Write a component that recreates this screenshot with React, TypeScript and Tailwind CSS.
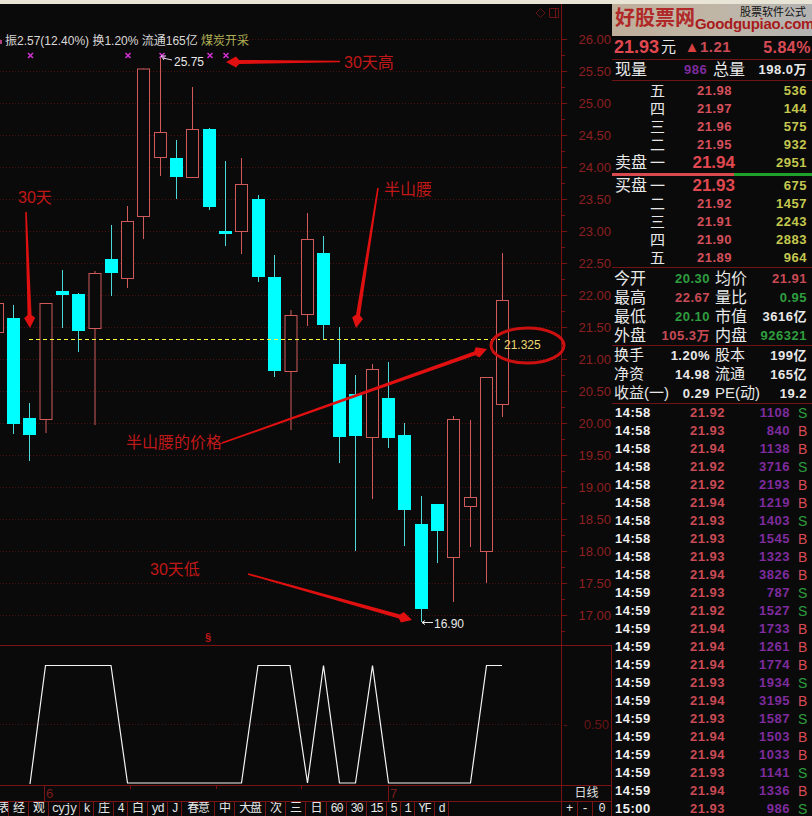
import React from "react";

const SANS = "font-['Liberation_Sans','Noto_Sans_CJK_SC',sans-serif]";

// x, top, bottom of body, wick top, wick bottom
type Candle = [number, number, number, number, number];

const upCandles: Candle[] = [
  [-9, 303, 332, 303, 332],
  [39.5, 303, 419, 303, 433],
  [88.5, 273, 328, 271, 425],
  [121, 221, 278, 206, 288],
  [137, 68.5, 216, 68.5, 239],
  [154, 132, 157, 57, 176],
  [186, 129, 177, 87, 177],
  [235, 184, 231, 158, 254],
  [284.5, 315, 371, 310, 430],
  [301, 239, 314, 213, 326],
  [366, 369, 437, 364, 499],
  [447, 419, 557, 416, 602],
  [464, 497, 506, 420, 547],
  [480, 377, 551, 377, 583],
  [496, 300, 404, 253, 417],
];

const downCandles: Candle[] = [
  [7, 318, 424, 305, 434],
  [23, 418, 435, 403, 461],
  [56, 291, 295, 270, 328],
  [72, 294, 331, 293, 352],
  [105, 259, 273, 225, 296],
  [170, 158, 177, 140, 199],
  [203, 129, 207, 128, 210],
  [219, 231, 234, 161, 246],
  [252, 199, 277, 195, 282],
  [268, 277, 371, 255, 377],
  [317, 253, 325, 236, 340],
  [333, 364, 437, 327, 463],
  [349, 394, 436, 375, 551],
  [382, 398, 438, 362, 448],
  [398, 435, 510, 423, 546],
  [415, 524, 609, 496, 622],
  [431, 504, 531, 504, 563],
];

const prices = ["26.00", "25.50", "25.00", "24.50", "24.00", "23.50", "23.00", "22.50", "22.00", "21.50", "21.00", "20.50", "20.00", "19.50", "19.00", "18.50", "18.00", "17.50", "17.00"];

const gridYs = prices.map((_, i) => 39 + i * 32);

// tapered annotation arrow, thin at the tail
function arrowPoints(x1: number, y1: number, x2: number, y2: number, tail = 0.8, neck = 2, head = 5.5, len = 13) {
  const d = Math.hypot(x2 - x1, y2 - y1);
  const ux = (x2 - x1) / d;
  const uy = (y2 - y1) / d;
  const nx = -uy;
  const ny = ux;
  const bx = x2 - ux * len;
  const by = y2 - uy * len;
  const pts = [
    [x1 + nx * tail, y1 + ny * tail],
    [bx + nx * neck, by + ny * neck],
    [bx + ux * 3 + nx * head, by + uy * 3 + ny * head],
    [x2, y2],
    [bx + ux * 3 - nx * head, by + uy * 3 - ny * head],
    [bx - nx * neck, by - ny * neck],
    [x1 - nx * tail, y1 - ny * tail],
  ];
  return pts.map((p) => p.join(",")).join(" ");
}

function ChartDrawing() {
  return (
    <svg className="absolute inset-0" width={612} height={641} viewBox="0 4 612 641">
      {gridYs.map((y) => (
        <line key={y} x1={0} x2={561} y1={y + 0.5} y2={y + 0.5} stroke="#4a1212" strokeDasharray="1 2" />
      ))}
      <line x1={561.5} x2={561.5} y1={4} y2={645} stroke="#7a1414" />
      {gridYs.map((y) => (
        <g key={y} stroke="#7a1414">
          <line x1={562} x2={567} y1={y + 0.5} y2={y + 0.5} />
          <line x1={562} x2={565} y1={y + 16.5} y2={y + 16.5} />
        </g>
      ))}
      <path d="M540.5 8.5 L545 13 L540.5 17.5 L536 13 Z" fill="none" stroke="#5a1414" />
      <path d="M549.5 8.5 H558.5 V17.5 H549.5 Z M555.5 8.5 V17.5" fill="none" stroke="#6a1414" />

      {upCandles.map(([x, top, bottom, wickTop, wickBottom]) => (
        <g key={x} stroke="#d05a5a" fill="#0a0a0a">
          <line x1={x + 6.5} x2={x + 6.5} y1={wickTop} y2={wickBottom} />
          <rect x={x + 0.5} y={top + 0.5} width={12} height={bottom - top} />
        </g>
      ))}
      {downCandles.map(([x, top, bottom, wickTop, wickBottom]) => (
        <g key={x}>
          <line x1={x + 6.5} x2={x + 6.5} y1={wickTop} y2={wickBottom} stroke="#4fd8d8" />
          <rect x={x} y={top} width={13} height={bottom - top} fill="#00ffff" />
        </g>
      ))}

      <line x1={29} x2={500} y1={339.5} y2={339.5} stroke="#ffff40" strokeDasharray="4 3" />
      <ellipse cx={527.5} cy={345.5} rx={36.5} ry={17.5} fill="none" stroke="#cc1010" strokeWidth={3} />

      <g fill="#e01010">
        <polygon points={arrowPoints(340, 61.5, 226, 62)} />
        <polygon points={arrowPoints(378, 188, 356, 328)} />
        <polygon points={arrowPoints(26, 212, 30, 328)} />
        <polygon points={arrowPoints(222, 443, 487, 349)} />
        <polygon points={arrowPoints(248, 574, 412, 620)} />
      </g>

      {[30.5, 128, 162, 210, 226].map((x) => (
        <path key={x} d={`M${x - 2.5} 53 l5 5 M${x + 2.5} 53 l-5 5`} stroke="#d030d0" strokeWidth={1.6} />
      ))}
      <rect x={0} y={40} width={2} height={4} fill="#b04080" />
      <path d="M161 56 L164 60 M161 56 L166 56 M163 58 L172 60" stroke="#e8d8e8" fill="none" />
      <path d="M422 622.5 H433 M422 622.5 l3 -2 M422 622.5 l3 2" stroke="#e8e8e8" fill="none" />
    </svg>
  );
}

function Note({ className, children }: { className: string; children: React.ReactNode }) {
  return <span className={`absolute whitespace-nowrap leading-none ${className}`}>{children}</span>;
}

function MainChart() {
  return (
    <div className="relative flex h-[642px] shrink-0 border-b border-[#7a1414]">
      <ChartDrawing />
      <div className="relative flex-1">
        <Note className="left-[5px] top-[31px] text-[12px] text-[#d8d8d8]">
          振2.57(12.40%) 换1.20% 流通165亿 <span className="text-[#b0b058]">煤炭开采</span>
        </Note>
        <Note className="left-[174px] top-[52px] text-[12px] text-[#e8e8e8]">25.75</Note>
        <Note className="left-[434px] top-[614px] text-[12px] text-[#e8e8e8]">16.90</Note>
        <Note className="left-[504px] top-[335px] text-[12px] text-[#e8d870]">21.325</Note>
        <Note className="left-[18px] top-[186px] text-[16px] text-[#c01818]">30天</Note>
        <Note className="left-[344px] top-[51px] text-[16px] text-[#c01818]">30天高</Note>
        <Note className="left-[384px] top-[178px] text-[16px] text-[#c01818]">半山腰</Note>
        <Note className="left-[126px] top-[431px] text-[16px] text-[#c01818]">半山腰的价格</Note>
        <Note className="left-[150px] top-[558px] text-[16px] text-[#c01818]">30天低</Note>
        <Note className="left-[205px] top-[628px] text-[11px] font-bold text-[#c01818]">§</Note>
      </div>
      <div className="relative flex w-[50px] flex-col pt-[20px] text-[13px] text-[#8c2020]">
        {prices.map((p) => (
          <div key={p} className="flex h-8 shrink-0 items-center justify-end pr-[1px]">
            {p}
          </div>
        ))}
      </div>
    </div>
  );
}

function Indicator() {
  return (
    <div className="flex h-[140px] shrink-0 border-b border-[#7a1414]">
      <svg className="w-[561px] shrink-0" width={561} height={139} viewBox="0 646 561 139">
        <line x1={0} x2={561} y1={724.5} y2={724.5} stroke="#4a1212" strokeDasharray="1 2" />
        <polyline
          points="30,784 45.5,665.5 111,665.5 127.5,783 241.5,783 258,665.5 290,665.5 307.5,783 323.5,665.5 339.5,783 355.5,783 372.5,665.5 388.5,783 470.5,783 486.5,665.5 502,665.5"
          fill="none"
          stroke="#f4f4f4"
          strokeWidth={1.2}
        />
      </svg>
      <div className="flex flex-1 items-center justify-between border-x border-[#7a1414] pl-[1px] pr-[2px] pt-[19px] text-[13px] text-[#661414]">
        <span>-</span>
        <span>0.50</span>
      </div>
    </div>
  );
}

function DateBar() {
  return (
    <div className="flex h-[16px] shrink-0 border-b border-[#7a1414] text-[13px] leading-[15px]">
      <div className="relative flex w-[561px] shrink-0 pl-[44px] text-[#7c1c1c]">
        <span className="w-[344px] border-l border-[#7a1414] pl-[1px]">6</span>
        <span className="border-l border-[#7a1414] pl-[1px]">7</span>
        <i className="absolute left-[130px] top-0 h-[3px] w-[1px] bg-[#7a1414]" />
        <i className="absolute left-[216px] top-0 h-[3px] w-[1px] bg-[#7a1414]" />
        <i className="absolute left-[301px] top-0 h-[3px] w-[1px] bg-[#7a1414]" />
      </div>
      <div className="flex flex-1 justify-center border-x border-[#7a1414] text-[12px] text-[#e0e0e0]">日线</div>
    </div>
  );
}

const tabs: [string, number][] = [
  ["表", 9], ["经", 20], ["观", 20], ["cyjy", 31], ["k", 14], ["庄", 20], ["4", 14], ["白", 20], ["yd", 20], ["J", 14],
  ["春意", 33], ["中", 20], ["大盘", 31], ["次", 20], ["三", 20], ["日", 21], ["60", 20], ["30", 20], ["15", 20], ["5", 14], ["1", 14], ["YF", 20], ["d", 14],
];

function TabBar() {
  return (
    <div className="flex h-[14px] shrink-0 overflow-hidden font-['Liberation_Mono','Noto_Sans_CJK_SC',monospace] text-[12px] leading-[15px] text-[#e8e8e8]">
      <div className="flex w-[561px] shrink-0 overflow-hidden">
        {tabs.map(([label, w]) => (
          <div key={label} style={{ width: w }} className="flex shrink-0 justify-center overflow-hidden border-r border-[#7a1414] tracking-[-1.2px]">
            {label}
          </div>
        ))}
      </div>
      <div className="flex flex-1 border-x border-[#7a1414]">
        <div className="w-[16px] border-r border-[#7a1414] text-center">+</div>
        <div className="w-[15px] border-r border-[#7a1414] text-center">-</div>
        <div className="flex-1 text-center">0</div>
      </div>
    </div>
  );
}

const asks = [
  ["五", "21.98", "536"],
  ["四", "21.97", "144"],
  ["三", "21.96", "575"],
  ["二", "21.95", "932"],
];

const bids = [
  ["二", "21.92", "1457"],
  ["三", "21.91", "2243"],
  ["四", "21.90", "2883"],
  ["五", "21.89", "964"],
];

function BookRow({ side, level, price, vol, big }: { side?: string; level: string; price: string; vol: string; big?: boolean }) {
  return (
    <div className="flex h-[18px] items-center">
      <span className="w-[38px] pl-[3px] text-[16px] font-normal tracking-normal text-[#e8e8e8]">{side}</span>
      <span className="w-[22px] text-[15px] font-normal text-[#e8e8e8]">{level}</span>
      <span className={big ? "-mr-[3px] w-[63px] text-right text-[17px] tracking-normal text-[#e04850]" : "w-[60px] text-right text-[#d4505a]"}>{price}</span>
      <span className="flex-1 pr-[5px] text-right text-[#c4c84e]">{vol}</span>
    </div>
  );
}

const stats: { a: string; av: string; ac: string; b: string; bv: string; bc: string }[] = [
  { a: "今开", av: "20.30", ac: "text-[#2f9e3f]", b: "均价", bv: "21.91", bc: "text-[#c94a55]" },
  { a: "最高", av: "22.67", ac: "text-[#c94a55]", b: "量比", bv: "0.95", bc: "text-[#2f9e3f]" },
  { a: "最低", av: "20.10", ac: "text-[#2f9e3f]", b: "市值", bv: "3616亿", bc: "text-[#e8e8e8]" },
  { a: "外盘", av: "105.3万", ac: "text-[#c94a55]", b: "内盘", bv: "926321", bc: "text-[#2f9e3f]" },
];

const extras = [
  ["换手", "1.20%", "股本", "199亿"],
  ["净资", "14.98", "流通", "165亿"],
  ["收益(一)", "0.29", "PE(动)", "19.2"],
];

const trades: [string, string, string, "S" | "B"][] = [
  ["14:58", "21.92", "1108", "S"],
  ["14:58", "21.93", "840", "B"],
  ["14:58", "21.94", "1138", "B"],
  ["14:58", "21.92", "3716", "S"],
  ["14:58", "21.92", "2193", "B"],
  ["14:58", "21.94", "1219", "B"],
  ["14:58", "21.93", "1403", "S"],
  ["14:58", "21.93", "1545", "B"],
  ["14:58", "21.93", "1323", "B"],
  ["14:58", "21.94", "3826", "B"],
  ["14:59", "21.93", "787", "S"],
  ["14:59", "21.92", "1527", "S"],
  ["14:59", "21.94", "1733", "B"],
  ["14:59", "21.94", "1261", "B"],
  ["14:59", "21.94", "1774", "B"],
  ["14:59", "21.93", "1934", "S"],
  ["14:59", "21.94", "3195", "B"],
  ["14:59", "21.93", "1587", "S"],
  ["14:59", "21.94", "1503", "B"],
  ["14:59", "21.94", "1033", "B"],
  ["14:59", "21.93", "1141", "S"],
  ["14:59", "21.94", "1336", "B"],
  ["15:00", "21.93", "986", "S"],
];

function SidePanel() {
  return (
    <div className="flex h-[812px] w-[200px] shrink-0 flex-col overflow-hidden text-[13px] font-bold tracking-[0.5px]">
      <div className="relative h-[32px] shrink-0 overflow-hidden bg-gradient-to-r from-[#bfae9a] via-[#c0b6a6] to-[#b3b3b3] font-normal tracking-normal">
        <span className="absolute left-[3px] top-[1px] text-[20px] font-bold leading-[26px] text-[#b02828]">好股票网</span>
        <span className="absolute left-[83px] top-[10px] text-[15px] font-bold leading-[20px] tracking-[-0.3px] text-[#a81c1c]">Goodgupiao.com</span>
        <span className="absolute right-[6px] top-0 text-[11px] leading-[16px] text-[#111]">股票软件公式</span>
      </div>

      <div className="flex h-[24px] shrink-0 items-center border-b border-[#6e1414] pl-[2px] pr-[1px]">
        <span className="text-[18px] tracking-normal text-[#e04850]">21.93</span>
        <span className="ml-[2px] text-[15px] font-normal text-[#e8e8e8]">元</span>
        <span className="ml-[8px] text-[15px] font-normal text-[#d94040]">▲</span>
        <span className="text-[15px] text-[#c94a55]">1.21</span>
        <span className="ml-auto text-[16px] text-[#d94a55]">5.84%</span>
      </div>

      <div className="flex h-[21px] shrink-0 items-center border-b border-[#6e1414] pl-[3px] pr-[5px]">
        <span className="w-[69px] text-[16px] font-normal tracking-normal text-[#e8e8e8]">现量</span>
        <span className="w-[29px] text-[#7e2c9e]">986</span>
        <span className="text-[16px] font-normal tracking-normal text-[#e8e8e8]">总量</span>
        <span className="ml-auto text-[#e8e8e8]">198.0万</span>
      </div>

      <div className="shrink-0 pt-[1px]">
        {asks.map(([l, p, v]) => (
          <BookRow key={l} level={l} price={p} vol={v} />
        ))}
        <BookRow side="卖盘" level="一" price="21.94" vol="2951" big />
      </div>
      <div className="mt-[1px] flex h-[3px] shrink-0">
        <div className="w-[122px] bg-[#d84a50]" />
        <div className="flex-1 bg-[#1fa02a]" />
      </div>
      <div className="shrink-0 border-b border-[#6e1414] pt-[1px]">
        <BookRow side="买盘" level="一" price="21.93" vol="675" big />
        {bids.map(([l, p, v]) => (
          <BookRow key={l} level={l} price={p} vol={v} />
        ))}
      </div>

      <div className="shrink-0 border-b border-[#6e1414] pt-[1px]">
        {stats.map((s) => (
          <div key={s.a} className="flex h-[19px] items-center pl-[2px] pr-[5px]">
            <div className="flex w-[96px] shrink-0 items-center justify-between">
              <span className="text-[16px] font-normal tracking-normal text-[#e8e8e8]">{s.a}</span>
              <span className={s.ac}>{s.av}</span>
            </div>
            <span className="ml-[5px] text-[16px] font-normal tracking-normal text-[#e8e8e8]">{s.b}</span>
            <span className={`ml-auto ${s.bc}`}>{s.bv}</span>
          </div>
        ))}
      </div>

      <div className="shrink-0 border-b border-[#6e1414]">
        {extras.map(([a, av, b, bv]) => (
          <div key={a} className="flex h-[19px] items-center pl-[2px] pr-[5px]">
            <div className="flex w-[96px] shrink-0 items-center justify-between">
              <span className="whitespace-nowrap text-[15px] font-normal tracking-normal text-[#e8e8e8]">{a}</span>
              <span className="text-[#e8e8e8]">{av}</span>
            </div>
            <span className="ml-[5px] whitespace-nowrap text-[15px] font-normal tracking-normal text-[#e8e8e8]">{b}</span>
            <span className="ml-auto text-[#e8e8e8]">{bv}</span>
          </div>
        ))}
      </div>

      <div className="shrink-0">
        {trades.map(([t, p, v, s], i) => (
          <div key={i} className="flex h-[18px] items-center pl-[3px]">
            <span className="w-[75px] text-[#f0f0f0]">{t}</span>
            <span className="w-[35px] text-[#c94a55]">{p}</span>
            <span className="w-[65px] text-right text-[#7e2c9e]">{v}</span>
            <span className={`ml-[8px] text-[14px] font-normal ${s === "S" ? "text-[#2f9e3f]" : "text-[#d94a55]"}`}>{s}</span>
          </div>
        ))}
      </div>
    </div>
  );
}

export default function App() {
  return (
    <div className={`h-[816px] w-[812px] overflow-hidden bg-[#0a0a0a] ${SANS}`}>
      <div className="h-[4px] bg-[#e8e4d6]" />
      <div className="flex h-[812px]">
        <div className="w-[612px] shrink-0">
          <MainChart />
          <Indicator />
          <DateBar />
          <TabBar />
        </div>
        <SidePanel />
      </div>
    </div>
  );
}
